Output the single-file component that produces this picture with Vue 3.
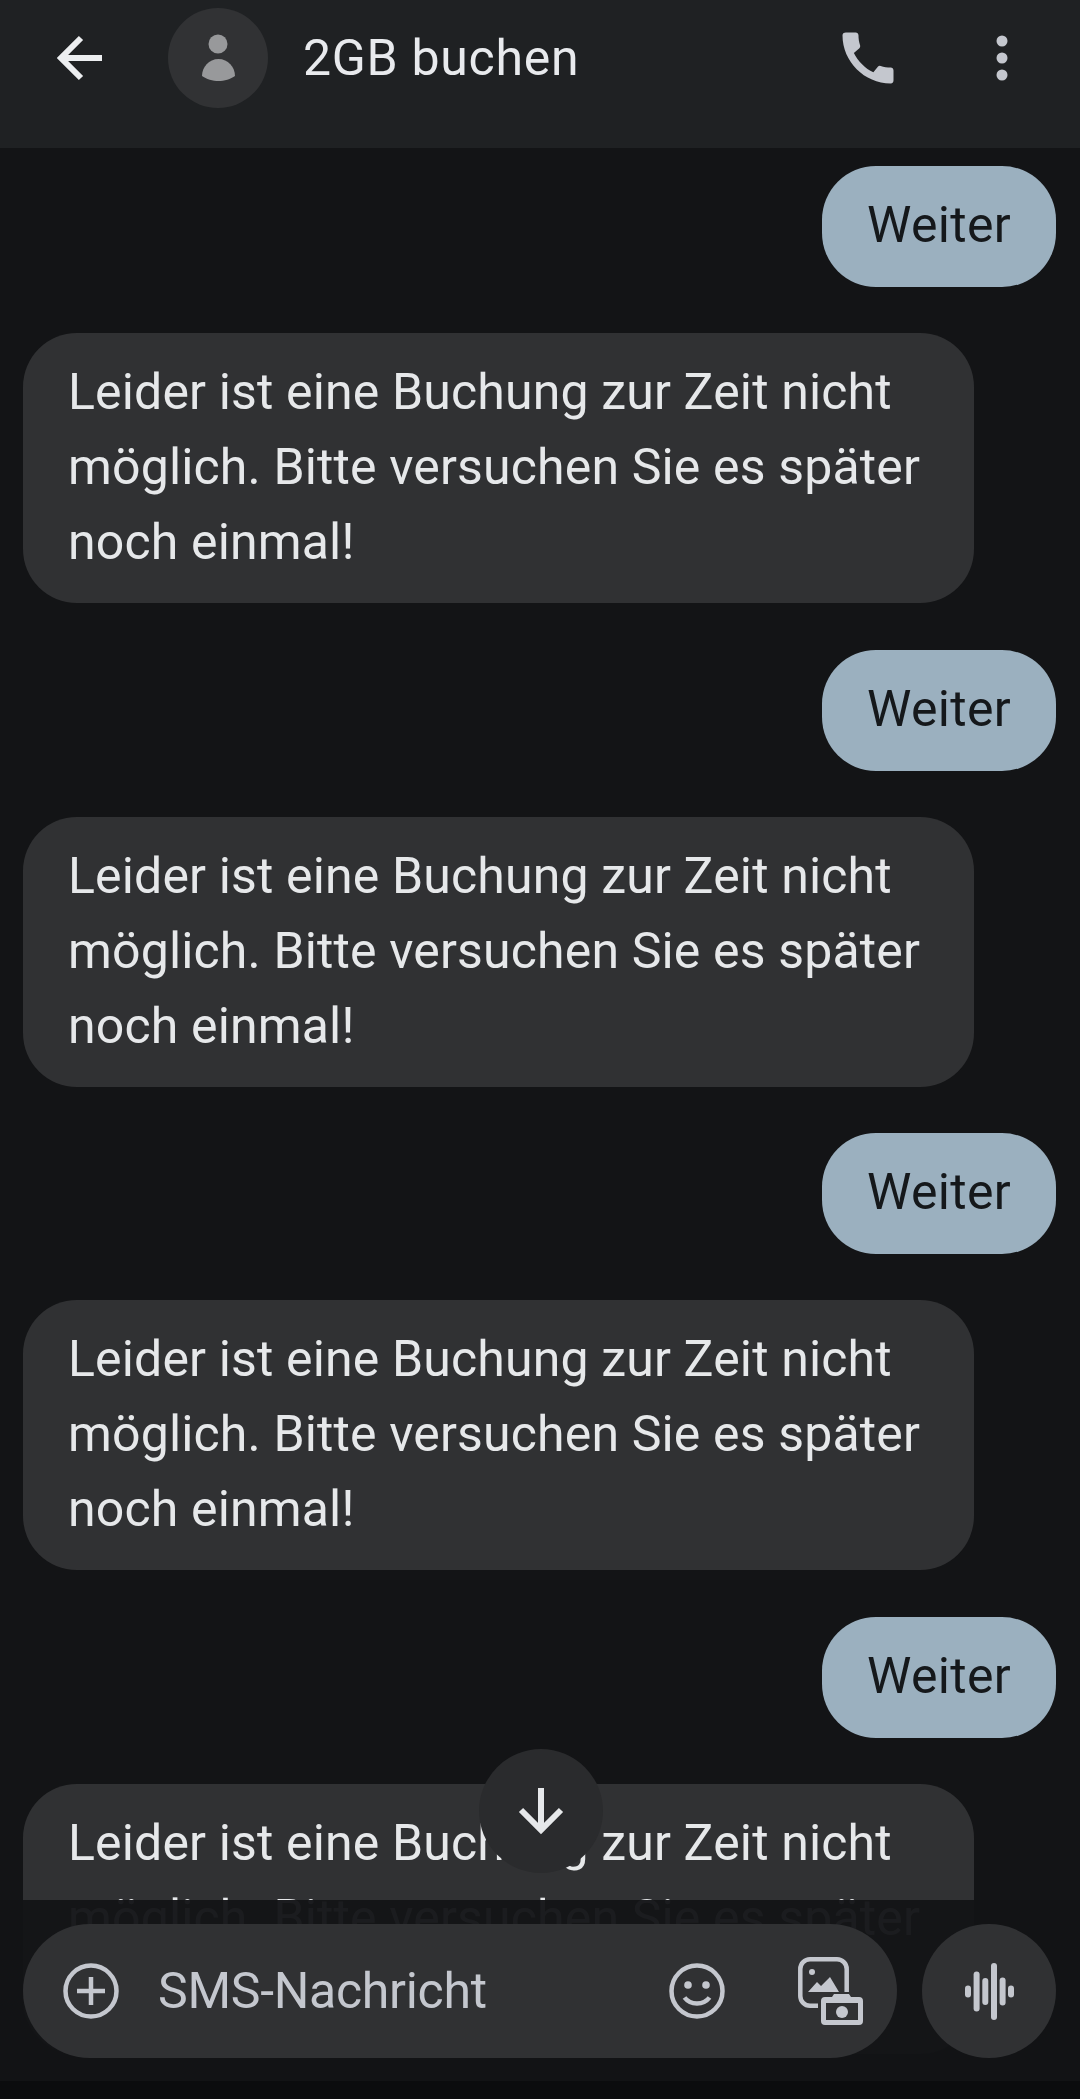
<template>
  <div class="pantalla">
    <header class="cabecera">
      <svg class="iconoAtras" viewBox="0 0 48 48"><path d="M47 24H6M26 4 6 24l20 20" fill="none" stroke="#eceef0" stroke-width="6"/></svg>
      <div class="avatar">
        <svg viewBox="0 0 48 48" width="48" height="48"><circle cx="24" cy="10" r="9.500" fill="#98999b"/><path d="M8 42c0-9 7-17 16.500-17S41 33 41 42c-4 3-11 5-16.500 5S12 45 8 42z" fill="#98999b"/></svg>
      </div>
      <span class="titulo">2GB buchen</span>
      <svg class="iconoTel" viewBox="0 0 24 24"><path d="M20.010 15.380c-1.230 0-2.420-.2-3.530-.56a.977.977 0 0 0-1.010.24l-1.570 1.970c-2.830-1.350-5.480-3.900-6.890-6.830l1.950-1.660c.27-.28.350-.67.240-1.020-.37-1.110-.56-2.300-.56-3.530 0-.54-.45-.99-.99-.99H4.190C3.650 3 3 3.240 3 3.990 3 13.280 10.730 21 20.010 21c.71 0 .99-.63.990-1.180v-3.450c0-.54-.45-.99-.99-.99z" fill="#c4c7ce"/></svg>
      <svg class="iconoMenu" viewBox="0 0 12 46"><circle cx="6" cy="6" r="5.500" fill="#c4c7ce"/><circle cx="6" cy="23" r="5.500" fill="#c4c7ce"/><circle cx="6" cy="40" r="5.500" fill="#c4c7ce"/></svg>
    </header>

    <main class="conversacion">
      <template v-for="n in 4" :key="n">
        <div class="enviado">Weiter</div>
        <div class="recibido">Leider ist eine Buchung zur Zeit nicht möglich. Bitte versuchen Sie es später noch einmal!</div>
      </template>
    </main>

    <button class="bajar">
      <svg viewBox="0 0 48 48" width="48" height="48"><path d="M24 1v42M4 23l20 20 20-20" fill="none" stroke="#e6e8ea" stroke-width="6"/></svg>
    </button>

    <footer class="pie">
      <div class="redactar">
        <svg class="iconoMas" viewBox="0 0 56 56"><circle cx="28" cy="28" r="25.500" fill="none" stroke="#c4c7ce" stroke-width="4.500"/><path d="M28 14v28M14 28h28" stroke="#c4c7ce" stroke-width="4.500"/></svg>
        <span class="placeholder">SMS-Nachricht</span>
        <svg class="iconoEmoji" viewBox="0 0 56 56"><circle cx="28" cy="28" r="25.500" fill="none" stroke="#c4c7ce" stroke-width="4.500"/><circle cx="19" cy="22" r="3.800" fill="#c4c7ce"/><circle cx="37" cy="22" r="3.800" fill="#c4c7ce"/><path d="M15.500 34.500c3 4 7.500 6 12.500 6s9.500-2 12.500-6" fill="none" stroke="#c4c7ce" stroke-width="4.500"/></svg>
        <svg class="iconoGaleria" viewBox="0 0 65 68">
          <path d="M20 48.700H12A9.700 9.700 0 0 1 2.300 39V12A9.700 9.700 0 0 1 12 2.300h27A9.700 9.700 0 0 1 48.700 12v23" fill="none" stroke="#c4c7ce" stroke-width="4.500"/>
          <circle cx="14" cy="15" r="3" fill="#c4c7ce"/>
          <path d="M10 35l9-10 4 4 9-9 9 15z" fill="#c4c7ce"/>
          <path d="M23 44a4 4 0 0 1 4-4h7l2-3h15l2 3h8a4 4 0 0 1 4 4v20a4 4 0 0 1-4 4H27a4 4 0 0 1-4-4z" fill="#c4c7ce"/>
          <rect x="28" y="46" width="32" height="17" fill="#303133"/>
          <circle cx="44" cy="55" r="6" fill="#c4c7ce"/>
        </svg>
      </div>
      <div class="voz">
        <svg viewBox="0 0 49 57" width="49" height="57">
          <rect x="0" y="22.500" width="6" height="12" rx="3"/><rect x="8.600" y="8.500" width="6" height="40" rx="3"/><rect x="17.300" y="15" width="6" height="27" rx="3"/><rect x="26" y="0" width="6" height="57" rx="3"/><rect x="34.600" y="14.500" width="6" height="28" rx="3"/><rect x="43" y="22.500" width="6" height="12" rx="3"/>
        </svg>
      </div>
    </footer>
    <div class="navegacion"></div>
  </div>
</template>

<script setup>
</script>

<style>
html, body {
  margin: 0;
  background: #131416;
}
</style>

<style scoped>
.pantalla {
  position: relative;
  width: 1080px;
  height: 2099px;
  overflow: hidden;
  display: flex;
  flex-direction: column;
  background: #131416;
  font-family: Roboto, "Noto Sans", sans-serif;
}

.cabecera {
  flex: none;
  height: 148px;
  box-sizing: border-box;
  padding: 8px 0 40px 55px;
  display: flex;
  align-items: center;
  background: #1f2123;
}

.iconoAtras {
  width: 48px;
  height: 48px;
  flex: none;
}

.avatar {
  width: 100px;
  height: 100px;
  margin-left: 65px;
  border-radius: 50%;
  background: #313234;
  display: flex;
  align-items: center;
  justify-content: center;
  flex: none;
}

.titulo {
  margin-left: 35px;
  flex: 1;
  font-size: 50px;
  letter-spacing: 0.700px;
  color: #e8eaed;
}

.iconoTel {
  width: 68px;
  height: 68px;
  flex: none;
}

.iconoMenu {
  width: 12px;
  height: 46px;
  margin: 0 72px 0 94.500px;
  flex: none;
}

.conversacion {
  flex: 1;
  box-sizing: border-box;
  padding: 18px 24px 0 23px;
  display: flex;
  flex-direction: column;
  gap: 46.300px;
}

.enviado {
  flex: none;
  align-self: flex-end;
  height: 121px;
  line-height: 119px;
  padding: 0 45px;
  border-radius: 54px;
  background: #9bb0bf;
  color: #15181b;
  font-size: 50px;
  letter-spacing: 0.300px;
}

.recibido {
  flex: none;
  box-sizing: border-box;
  width: 951px;
  height: 270px;
  padding: 22px 40px 0 45px;
  border-radius: 54px;
  background: #303133;
  color: #e6e8ea;
  font-size: 50px;
  line-height: 75px;
  letter-spacing: 0.150px;
}

.bajar {
  position: absolute;
  left: 479px;
  top: 1749px;
  width: 124px;
  height: 124px;
  border: none;
  padding: 0;
  border-radius: 50%;
  background: #2a2b2d;
  display: flex;
  align-items: center;
  justify-content: center;
}

.pie {
  position: absolute;
  left: 0;
  right: 0;
  top: 1900px;
  height: 181px;
  box-sizing: border-box;
  padding: 24px 24px 0 23px;
  display: flex;
  gap: 25px;
  background: rgba(19, 20, 22, 0.96);
}

.redactar {
  width: 874px;
  height: 134px;
  border-radius: 67px;
  background: #303133;
  display: flex;
  align-items: center;
  padding-left: 40px;
  box-sizing: border-box;
}

.iconoMas, .iconoEmoji {
  width: 56px;
  height: 56px;
  flex: none;
}

.placeholder {
  flex: 1;
  margin-left: 39px;
  font-size: 50px;
  letter-spacing: -0.300px;
  color: #c4c7ce;
}

.iconoGaleria {
  width: 65px;
  height: 68px;
  margin: 0 34px 0 73px;
  flex: none;
}

.voz {
  width: 134px;
  height: 134px;
  border-radius: 50%;
  background: #303133;
  display: flex;
  align-items: center;
  justify-content: center;
}

.voz rect {
  fill: #c4c7ce;
}

.navegacion {
  position: absolute;
  left: 0;
  right: 0;
  bottom: 0;
  height: 18px;
  background: #0b0c0e;
}
</style>
